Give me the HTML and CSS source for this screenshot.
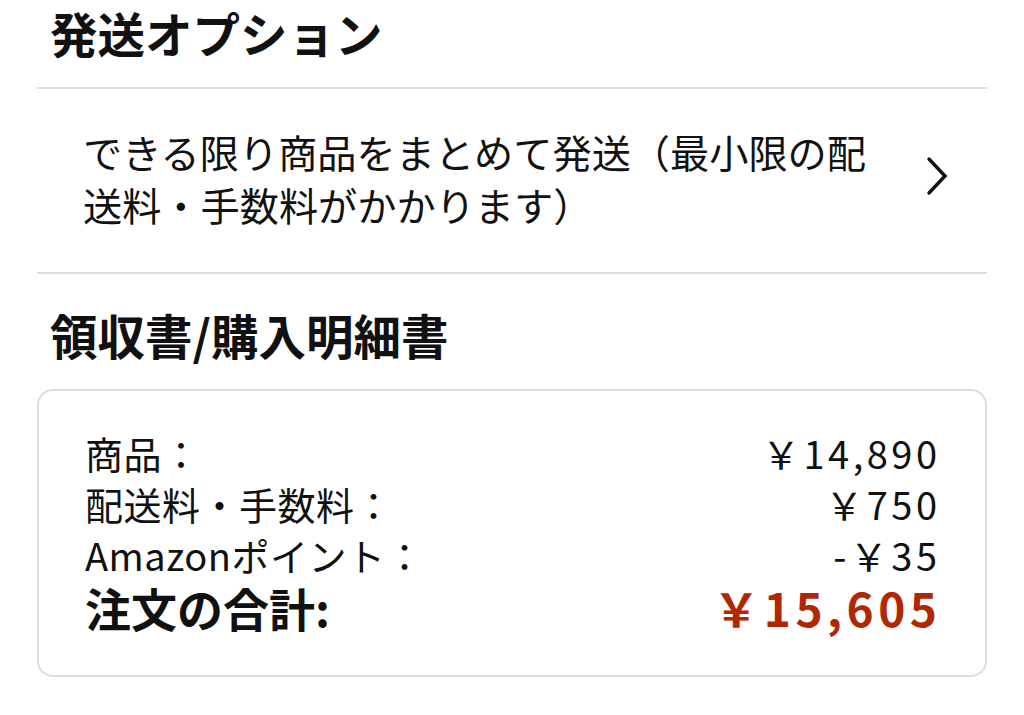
FILE: index.html
```html
<!DOCTYPE html>
<html lang="ja">
<head>
	<meta charset="utf-8">
	<title>発送オプション</title>
	<meta name="viewport" content="width=device-width, initial-scale=1">
	<link rel="stylesheet" href="styles.css">
</head>
<body>
	<div class="page">
		<h2 class="section-title first">発送オプション</h2>
		<div class="divider"></div>

		<div class="option-row">
			<p class="option-text">できる限り商品をまとめて発送（最小限の配送料・手数料がかかります）</p>
			<svg class="chevron" width="24" height="40" viewBox="0 0 24 40">
				<polyline points="4,3 20,20 4,37" fill="none" stroke="#111" stroke-width="3.4" stroke-linecap="round" stroke-linejoin="miter"/>
			</svg>
		</div>
		<div class="divider"></div>

		<h2 class="section-title second">領収書/購入明細書</h2>

		<div class="summary">
			<div class="summary-row">
				<span class="label">商品：</span>
				<span class="amount">￥14,890</span>
			</div>
			<div class="summary-row">
				<span class="label">配送料・手数料：</span>
				<span class="amount">￥750</span>
			</div>
			<div class="summary-row">
				<span class="label">Amazonポイント：</span>
				<span class="amount">-￥35</span>
			</div>
			<div class="summary-row total">
				<span class="label">注文の合計:</span>
				<span class="amount total-price">￥15,605</span>
			</div>
		</div>
	</div>
</body>
</html>
```

FILE: styles.css
```css
* {
	font-family: "Noto Sans CJK JP", "Noto Sans", sans-serif;
	box-sizing: border-box;
}
body {
	margin: 0;
	padding: 0;
	background-color: #fff;
	color: #111;
}
.page {
	padding: 0 37px;
}
.section-title {
	margin: 0;
	font-size: 47.5px;
	font-weight: bold;
	line-height: 60px;
	padding-left: 13px;
	color: #111;
}
.section-title.first {
	padding-top: 3px;
	padding-bottom: 24px;
}
.section-title.second {
	padding-top: 31px;
	margin-bottom: 24px;
}
.section-title.second .slash {
	letter-spacing: 1px;
}
.divider {
	height: 2px;
	background-color: #dddddd;
}
.option-row {
	display: flex;
	align-items: center;
	justify-content: space-between;
	padding: 36px 38px 41px 46px;
}
.option-text {
	margin: 0;
	font-size: 39.2px;
	line-height: 53px;
	max-width: 800px;
	color: #111;
}
.chevron {
	flex-shrink: 0;
	margin-top: -4px;
}
.summary {
	border: 2px solid #dddddd;
	border-radius: 16px;
	padding: 36px 48px 40px 46px;
}
.summary-row {
	display: flex;
	justify-content: space-between;
	font-size: 38px;
	line-height: 51px;
}
.summary-row .label {
	letter-spacing: 0.5px;
}
.summary-row .amount {
	letter-spacing: 3.5px;
	margin-right: -3.5px;
}
.summary-row.total {
	font-size: 46px;
	font-weight: bold;
	line-height: 55px;
}
.summary-row.total .label {
	letter-spacing: 0;
}
.total-price {
	color: #b12704;
}
.summary-row .total-price {
	letter-spacing: 4.5px;
	margin-right: -4.5px;
}
```
